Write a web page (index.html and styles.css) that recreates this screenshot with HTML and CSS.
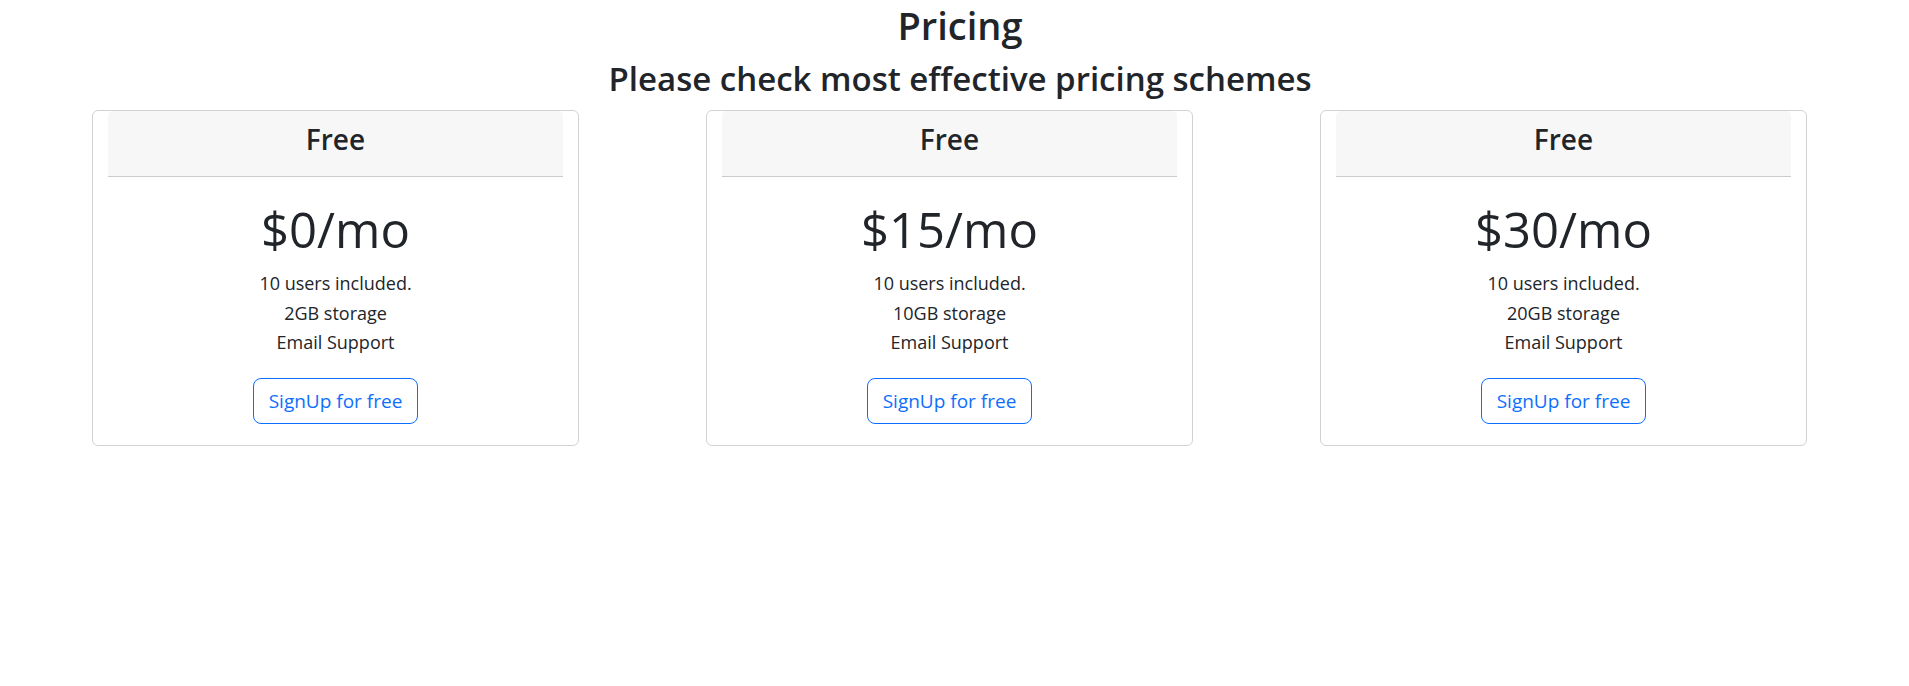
FILE: index.html
```html
<!DOCTYPE html>
<html lang="en">
<head>
<meta charset="utf-8">
<title>Pricing</title>
<link rel="stylesheet" href="styles.css">
</head>
<body>
  <header class="intro">
    <h1 class="title">Pricing</h1>
    <h2 class="subtitle">Please check most effective pricing schemes</h2>
  </header>
  <main class="plans">
    <section class="card">
      <div class="card-header"><h3 class="plan-name">Free</h3></div>
      <div class="card-body">
        <div class="price">$0/mo</div>
        <ul class="features">
          <li>10 users included.</li>
          <li>2GB storage</li>
          <li>Email Support</li>
        </ul>
        <button class="btn-outline" type="button">SignUp for free</button>
      </div>
    </section>
    <section class="card">
      <div class="card-header"><h3 class="plan-name">Free</h3></div>
      <div class="card-body">
        <div class="price">$15/mo</div>
        <ul class="features">
          <li>10 users included.</li>
          <li>10GB storage</li>
          <li>Email Support</li>
        </ul>
        <button class="btn-outline" type="button">SignUp for free</button>
      </div>
    </section>
    <section class="card">
      <div class="card-header"><h3 class="plan-name">Free</h3></div>
      <div class="card-body">
        <div class="price">$30/mo</div>
        <ul class="features">
          <li>10 users included.</li>
          <li>20GB storage</li>
          <li>Email Support</li>
        </ul>
        <button class="btn-outline" type="button">SignUp for free</button>
      </div>
    </section>
  </main>
</body>
</html>
```
FILE: styles.css
```css
* { box-sizing: border-box; }

body {
  margin: 0;
  font-family: "Open Sans", "Noto Sans", sans-serif;
  color: #212529;
  background: #fff;
}

.intro {
  text-align: center;
  padding: 2px 0 0 11px;
}

.title {
  margin: 0;
  font-size: 38px;
  font-weight: 600;
  line-height: 46px;
}

.subtitle {
  margin: 11px 0 0;
  font-size: 33px;
  font-weight: 600;
  line-height: 40px;
}

.plans {
  display: flex;
  gap: 127px;
  padding-left: 92px;
  margin-top: 11px;
}

.card {
  width: 487px;
  height: 336px;
  border: 1px solid rgba(0, 0, 0, 0.175);
  border-radius: 6px;
  padding: 0 15px;
  text-align: center;
}

.card-header {
  height: 66px;
  background: #f7f7f7;
  border-bottom: 1px solid rgba(0, 0, 0, 0.175);
  border-radius: 5px 5px 0 0;
  padding-top: 11px;
}

.plan-name {
  margin: 0;
  font-size: 28px;
  font-weight: 600;
  line-height: 34px;
}

.card-body {
  padding-top: 23px;
}

.price {
  font-size: 49px;
  font-weight: 500;
  line-height: 58px;
}

.features {
  list-style: none;
  margin: 11px 0 0;
  padding: 0;
  font-size: 18px;
  line-height: 29.5px;
}

.btn-outline {
  margin-top: 20px;
  font-family: inherit;
  font-size: 19px;
  line-height: 30px;
  padding: 7px 15px;
  color: #0d6efd;
  background: #fff;
  border: 1px solid #0d6efd;
  border-radius: 8px;
  cursor: pointer;
}
```
